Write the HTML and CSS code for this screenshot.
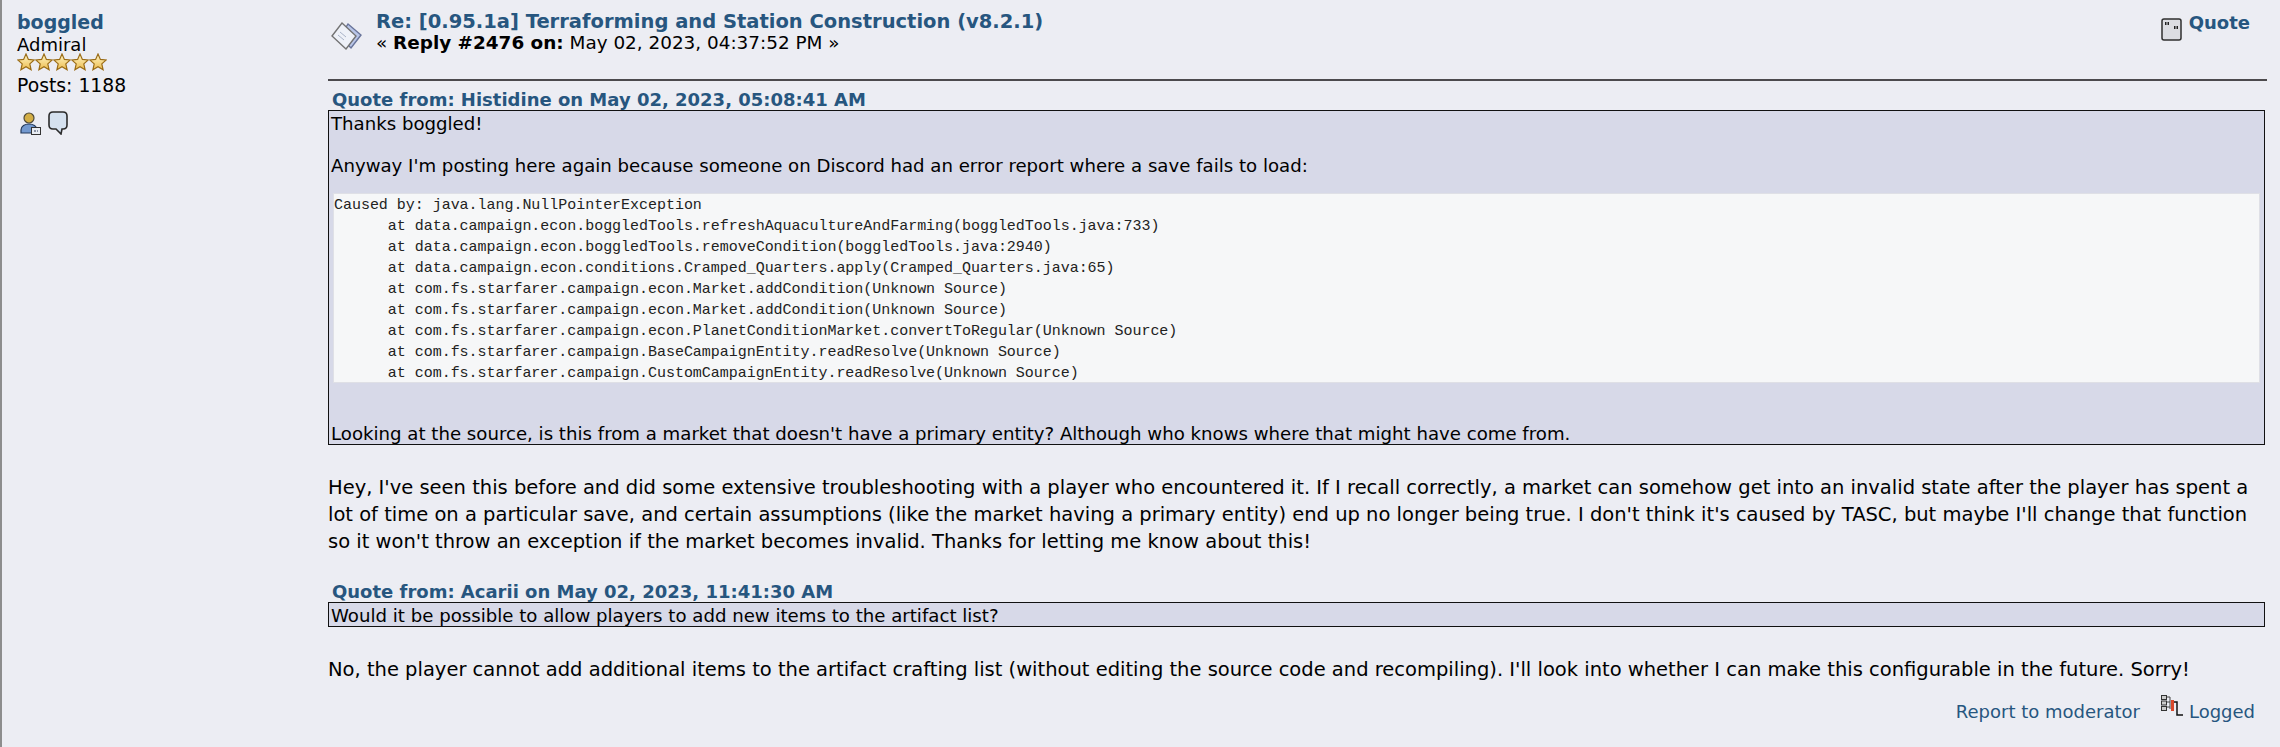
FILE: index.html
```html
<!DOCTYPE html>
<html lang="en">
<head>
    <meta charset="UTF-8">
    <title>Terraforming and Station Construction</title>
    <link rel="stylesheet" href="styles.css">
</head>
<body>
    <svg class="defs" width="0" height="0">
        <defs>
            <linearGradient id="star-fill" x1="0" y1="0" x2="0" y2="1">
                <stop offset="0" stop-color="#fff6c8"/>
                <stop offset="1" stop-color="#edbd4e"/>
            </linearGradient>
            <symbol id="star" viewBox="0 0 18 18">
                <path d="M9 1l2.400 5.400 5.800.6-4.400 3.900 1.300 5.800L9 13.700l-5.100 3 1.300-5.800L.8 7l5.800-.6z" fill="url(#star-fill)" stroke="#9a6c17" stroke-width="1.200"/>
            </symbol>
        </defs>
    </svg>
    <div class="post-wrapper">
        <div class="poster">
            <h4 class="poster-name"><a href="#">boggled</a></h4>
            <div class="poster-title">Admiral</div>
            <div class="poster-stars">
                <svg class="star"><use href="#star"/></svg>
                <svg class="star"><use href="#star"/></svg>
                <svg class="star"><use href="#star"/></svg>
                <svg class="star"><use href="#star"/></svg>
                <svg class="star"><use href="#star"/></svg>
            </div>
            <div class="poster-posts">Posts: 1188</div>
            <div class="poster-icons">
                <svg class="icon-profile" viewBox="0 0 21 23">
                    <ellipse cx="9" cy="6" rx="5" ry="5" fill="#d3ae45" stroke="#4f4a38" stroke-width="1.200"/>
                    <path d="M1 21v-3c0-4 4-6 8-6s8 2 8 6v3z" fill="#7399cf" stroke="#243a5c" stroke-width="1.200"/>
                    <rect x="11.500" y="15.500" width="9" height="7" fill="#e8ecf2" stroke="#333" stroke-width="1"/>
                    <path d="M14 18h2v2h-2zM17 18h1v2h-1z" fill="#8a93a5"/>
                </svg>
                <svg class="icon-pm" viewBox="0 0 20 24">
                    <path d="M5 1h10q4 0 4 4v9q0 4-4 4h-1l-1 5-5-5H5q-4 0-4-4V5q0-4 4-4z" fill="#d5e1ef" stroke="#2b2b2b" stroke-width="1.600"/>
                </svg>
            </div>
        </div>
        <div class="post-area">
            <div class="post-head">
                <svg class="icon-post" viewBox="0 0 31 28">
                    <path d="M17 2l13 11-10 13-11-11z" fill="#b9c6e8" stroke="#69749a" stroke-width="1.400"/>
                    <path d="M11 1l14 13-10 13L1 14z" fill="#eef1f8" stroke="#737373" stroke-width="1.400"/>
                    <path d="M9 10l6 5M7 13l6 5" stroke="#a9b3c8" stroke-width="1" fill="none"/>
                </svg>
                <div class="post-heading">
                    <h5 class="post-subject"><a href="#">Re: [0.95.1a] Terraforming and Station Construction (v8.2.1)</a></h5>
                    <div class="post-date">« <strong>Reply #2476 on:</strong> May 02, 2023, 04:37:52 PM »</div>
                </div>
                <div class="post-quote">
                    <svg class="icon-quote" viewBox="0 0 21 23">
                        <rect x="1" y="1" width="19" height="21" rx="2" fill="#dcdde2" stroke="#2f2f2f" stroke-width="1.500"/>
                        <path d="M4 4h1.500v3H4zM6.500 4H8v3H6.500zM13 8h1.500v3H13zM15.500 8H17v3h-1.500z" fill="#222"/>
                    </svg>
                    <a href="#">Quote</a>
                </div>
            </div>
            <div class="post-body">
                <div class="quote-header"><a href="#">Quote from: Histidine on May 02, 2023, 05:08:41 AM</a></div>
                <blockquote class="quote-box">
                    Thanks boggled!<br><br>
                    Anyway I'm posting here again because someone on Discord had an error report where a save fails to load:<br>
                    <pre class="code-box">Caused by: java.lang.NullPointerException
      at data.campaign.econ.boggledTools.refreshAquacultureAndFarming(boggledTools.java:733)
      at data.campaign.econ.boggledTools.removeCondition(boggledTools.java:2940)
      at data.campaign.econ.conditions.Cramped_Quarters.apply(Cramped_Quarters.java:65)
      at com.fs.starfarer.campaign.econ.Market.addCondition(Unknown Source)
      at com.fs.starfarer.campaign.econ.Market.addCondition(Unknown Source)
      at com.fs.starfarer.campaign.econ.PlanetConditionMarket.convertToRegular(Unknown Source)
      at com.fs.starfarer.campaign.BaseCampaignEntity.readResolve(Unknown Source)
      at com.fs.starfarer.campaign.CustomCampaignEntity.readResolve(Unknown Source)</pre>
                    <br>
                    Looking at the source, is this from a market that doesn't have a primary entity? Although who knows where that might have come from.
                </blockquote>
                <p class="post-text">Hey, I've seen this before and did some extensive troubleshooting with a player who encountered it. If I recall correctly, a market can somehow get into an invalid state after the player has spent a lot of time on a particular save, and certain assumptions (like the market having a primary entity) end up no longer being true. I don't think it's caused by TASC, but maybe I'll change that function so it won't throw an exception if the market becomes invalid. Thanks for letting me know about this!</p>
                <div class="quote-header second"><a href="#">Quote from: Acarii on May 02, 2023, 11:41:30 AM</a></div>
                <blockquote class="quote-box">Would it be possible to allow players to add new items to the artifact list?</blockquote>
                <p class="post-text">No, the player cannot add additional items to the artifact crafting list (without editing the source code and recompiling). I'll look into whether I can make this configurable in the future. Sorry!</p>
            </div>
            <div class="post-foot">
                <a href="#">Report to moderator</a>
                <svg class="icon-ip" viewBox="0 0 22 22">
                    <path d="M6 2h3v12M6 7h3M6 12h3" stroke="#444" stroke-width="1" fill="none"/>
                    <rect x=".5" y=".5" width="5" height="4" fill="#ccc" stroke="#333"/>
                    <rect x=".5" y="6" width="5" height="4" fill="#ccc" stroke="#333"/>
                    <rect x=".5" y="11.500" width="5" height="4" fill="#ccc" stroke="#333"/>
                    <rect x="10" y="5" width="3" height="11" fill="#d9482b"/>
                    <path d="M13 7h3v13h6" stroke="#111" stroke-width="1.500" fill="none"/>
                </svg>
                <a href="#">Logged</a>
            </div>
        </div>
    </div>
</body>
</html>
```

FILE: styles.css
```css
html, body {
    margin: 0;
    padding: 0;
}
body {
    height: 747px;
    overflow: hidden;
    background-color: #ecedf3;
    border-left: 2px solid #8d8d8d;
    font-family: 'DejaVu Sans', Verdana, sans-serif;
    font-size: 19.5px;
    color: #000;
}
a {
    color: #27567f;
    text-decoration: none;
}
.defs {
    position: absolute;
}
.post-wrapper {
    display: flex;
    padding: 10px 13px 0 15px;
}
.poster {
    width: 311px;
    flex: none;
    font-size: 18px;
    line-height: 21px;
}
.poster-name {
    margin: 0;
    font-size: 19px;
    font-weight: bold;
    line-height: 24px;
}
.poster-stars {
    display: flex;
    height: 18px;
    margin: -2px 0 4px;
}
.star {
    width: 18px;
    height: 18px;
}
.poster-posts {
    font-size: 18.8px;
}
.poster-icons {
    display: flex;
    align-items: flex-start;
    gap: 7px;
    margin-top: 15px;
    padding-left: 3px;
}
.icon-profile {
    width: 21px;
    height: 23px;
    margin-top: 1px;
}
.icon-pm {
    width: 20px;
    height: 24px;
}
.post-area {
    flex: 1;
}
.post-head {
    display: flex;
    align-items: flex-start;
    height: 69px;
    border-bottom: 2px solid #4c4a4d;
}
.icon-post {
    width: 31px;
    height: 28px;
    margin: 12px 14px 0 3px;
}
.post-heading {
    flex: 1;
}
.post-subject {
    margin: 1px 0 0;
    font-size: 19.5px;
    font-weight: bold;
    line-height: 22px;
}
.post-date {
    font-size: 18.4px;
    line-height: 20px;
}
.post-quote {
    display: flex;
    align-items: flex-start;
    margin-right: 17px;
    font-size: 18px;
    font-weight: bold;
}
.icon-quote {
    width: 21px;
    height: 23px;
    margin: 8px 7px 0 0;
}
.post-quote a {
    line-height: 26px;
}
.quote-header {
    margin-top: 9px;
    padding-left: 4px;
    font-size: 18px;
    font-weight: bold;
    line-height: 20px;
}
.quote-header.second {
    margin-top: 27px;
}
.quote-box {
    margin: 0 2px 0 0;
    padding: 2px 2px 0;
    border: 1px solid #111;
    background-color: #d7d9e8;
    font-size: 18.15px;
    line-height: 21px;
}
.code-box {
    box-sizing: border-box;
    height: 190px;
    margin: 17px 2px 19px;
    border: 1px solid #dfe0e6;
    padding-top: 1px;
    background-color: #f6f7f8;
    font-family: 'Liberation Mono', monospace;
    font-size: 15px;
    letter-spacing: -0.03px;
    line-height: 21px;
    color: #222;
}
.post-text {
    margin: 29px 0 0;
    line-height: 27px;
}
.post-foot {
    display: flex;
    justify-content: flex-end;
    align-items: flex-start;
    margin: 19px 12px 0 0;
    font-size: 18px;
    line-height: 20px;
}
.icon-ip {
    width: 22px;
    height: 22px;
    margin: -7px 6px 0 21px;
}
```
